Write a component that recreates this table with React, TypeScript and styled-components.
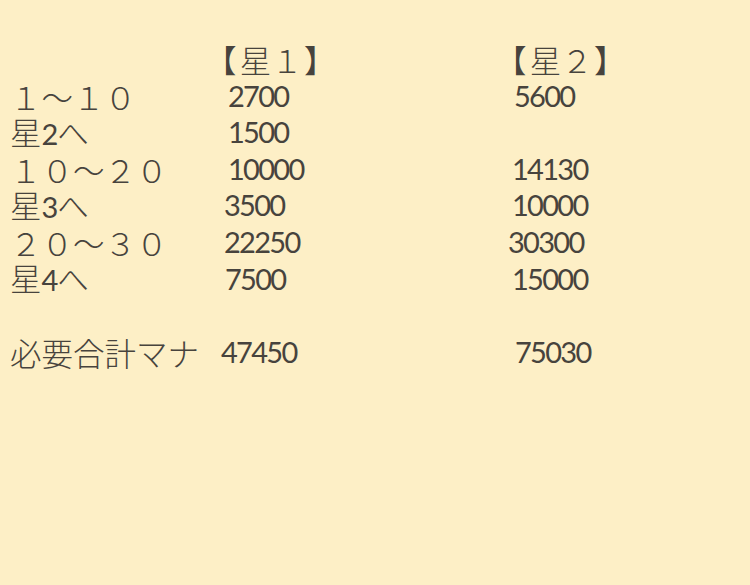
import React from "react";
import styled, { createGlobalStyle } from "styled-components";

const GlobalStyle = createGlobalStyle`
  html, body {
    margin: 0;
    padding: 0;
    background: #fdefc6;
  }
  body {
    color: #47433d;
    font-family: "Lato", "Noto Sans CJK JP", sans-serif;
  }
`;

const Sheet = styled.div`
  width: 750px;
  height: 585px;
  box-sizing: border-box;
  padding: 41px 0 0 10px;
  background: #fdefc6;
`;

const Table = styled.div`
  display: grid;
  grid-template-columns: 210px 288px 1fr;
  grid-auto-rows: 36.6px;
  align-items: center;
`;

const Label = styled.div`
  font-family: "Noto Sans CJK JP", sans-serif;
  font-weight: 300;
  font-size: 31.5px;
  line-height: 36.6px;
  white-space: nowrap;

  b {
    font-family: "Lato", sans-serif;
    font-weight: 400;
    font-size: 29px;
    letter-spacing: -1px;
  }
`;

const Head = styled.div<{ $shift?: number }>`
  font-family: "Noto Sans CJK JP", sans-serif;
  font-weight: 300;
  font-size: 31.5px;
  line-height: 36.6px;
  white-space: nowrap;
  margin-left: ${(p) => p.$shift ?? 0}px;
`;

const Bracket = styled.span<{ $gap: number }>`
  font-feature-settings: "palt";
  font-weight: 400;
  margin: 0 ${(p) => (p.$gap > 0 ? p.$gap : 0)}px 0 ${(p) => (p.$gap < 0 ? -p.$gap : 0)}px;
`;

const Value = styled.div<{ $shift?: number }>`
  font-family: "Lato", sans-serif;
  font-size: 29px;
  line-height: 36.6px;
  letter-spacing: -1.7px;
  margin-left: ${(p) => p.$shift ?? 0}px;
`;

interface Row {
  label: React.ReactNode;
  one: string;
  two: string;
  shiftOne?: number;
  shiftTwo?: number;
}

const rows: Row[] = [
  { label: "１〜１０", one: "2700", two: "5600", shiftOne: 8, shiftTwo: 6 },
  { label: <>星<b>2</b>へ</>, one: "1500", two: "", shiftOne: 8 },
  { label: "１０〜２０", one: "10000", two: "14130", shiftOne: 8, shiftTwo: 4 },
  { label: <>星<b>3</b>へ</>, one: "3500", two: "10000", shiftOne: 4, shiftTwo: 4 },
  { label: "２０〜３０", one: "22250", two: "30300", shiftOne: 4, shiftTwo: 0 },
  { label: <>星<b>4</b>へ</>, one: "7500", two: "15000", shiftOne: 5, shiftTwo: 4 },
  { label: "", one: "", two: "" },
  { label: "必要合計マナ", one: "47450", two: "75030", shiftOne: 1, shiftTwo: 7 },
];

function StarHead({ n, shift }: { n: string; shift: number }) {
  return (
    <Head $shift={shift}>
      <Bracket $gap={4}>【</Bracket>星{n}<Bracket $gap={-2}>】</Bracket>
    </Head>
  );
}

export default function App() {
  return (
    <>
      <GlobalStyle />
      <Sheet>
        <Table>
          <Label />
          <StarHead n="１" shift={0} />
          <StarHead n="２" shift={2} />
          {rows.map((row, i) => (
            <React.Fragment key={i}>
              <Label>{row.label}</Label>
              <Value $shift={row.shiftOne}>{row.one}</Value>
              <Value $shift={row.shiftTwo}>{row.two}</Value>
            </React.Fragment>
          ))}
        </Table>
      </Sheet>
    </>
  );
}
